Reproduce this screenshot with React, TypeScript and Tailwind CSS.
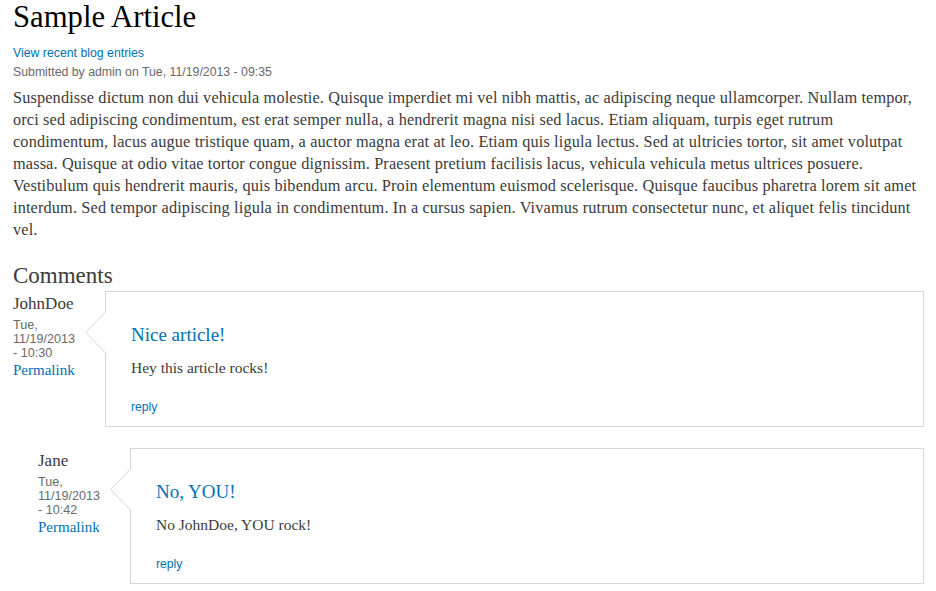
import React from 'react';

const serif = "font-['Liberation_Serif','Times_New_Roman',serif]";
const sans = "font-['Liberation_Sans',Arial,sans-serif]";

type CommentData = {
  author: string;
  date: string[];
  title: string;
  body: string;
};

const comments: CommentData[] = [
  { author: 'JohnDoe', date: ['Tue,', '11/19/2013', '- 10:30'], title: 'Nice article!', body: 'Hey this article rocks!' },
  { author: 'Jane', date: ['Tue,', '11/19/2013', '- 10:42'], title: 'No, YOU!', body: 'No JohnDoe, YOU rock!' },
];

// body text, broken where the original column wraps
const articleLines = [
  'Suspendisse dictum non dui vehicula molestie. Quisque imperdiet mi vel nibh mattis, ac adipiscing neque ullamcorper. Nullam tempor,',
  'orci sed adipiscing condimentum, est erat semper nulla, a hendrerit magna nisi sed lacus. Etiam aliquam, turpis eget rutrum',
  'condimentum, lacus augue tristique quam, a auctor magna erat at leo. Etiam quis ligula lectus. Sed at ultricies tortor, sit amet volutpat',
  'massa. Quisque at odio vitae tortor congue dignissim. Praesent pretium facilisis lacus, vehicula vehicula metus ultrices posuere.',
  'Vestibulum quis hendrerit mauris, quis bibendum arcu. Proin elementum euismod scelerisque. Quisque faucibus pharetra lorem sit amet',
  'interdum. Sed tempor adipiscing ligula in condimentum. In a cursus sapien. Vivamus rutrum consectetur nunc, et aliquet felis tincidunt',
  'vel.',
];

function Arrow() {
  return (
    <svg width="21" height="41" viewBox="0 0 21 41" className="absolute left-[-21px] top-[20px]">
      <polygon points="21,0 0.5,20.5 21,41" fill="#fff" />
      <polyline points="20.5,0 0.5,20.5 20.5,41" fill="none" stroke="#d3d7d9" strokeWidth="1" />
    </svg>
  );
}

function Comment({ c, indent }: { c: CommentData; indent?: boolean }) {
  return (
    <div className={indent ? 'flex pl-[25px]' : 'flex'}>
      <div className="w-[92px] shrink-0 pt-[3px]">
        <div className={`${serif} text-[17px] leading-[20px] text-[#3b3b3b]`}>{c.author}</div>
        <div className={`${sans} mt-[4px] w-[72px] text-[12.6px] leading-[14px] text-[#68696b]`}>
          {c.date.map((d) => (
            <div key={d}>{d}</div>
          ))}
        </div>
        <a className={`${serif} mt-[1px] block text-[15px] leading-[18px] text-[#0071b3]`}>Permalink</a>
      </div>
      <div className="relative flex-1 border border-[#d3d7d9] bg-white pl-[25px] pt-[31px] pb-[10px]">
        <Arrow />
        <h3 className={`${serif} text-[19px] leading-[24px] text-[#0071b3]`}>{c.title}</h3>
        <p className={`${serif} mt-[10px] text-[15.5px] leading-[22px] text-[#3b3b3b]`}>{c.body}</p>
        <a className={`${sans} mt-[19px] block text-[12.2px] leading-[18px] text-[#0071b3]`}>reply</a>
      </div>
    </div>
  );
}

export default function App() {
  return (
    <div className="min-h-screen bg-white pl-[13px] pr-[12px]">
      <h1 className={`${serif} text-[30.7px] leading-[34px] text-black`}>Sample Article</h1>
      <div className={`${sans} mt-[10px] text-[12.3px] leading-[19px]`}>
        <a className="block text-[#0071b3]">View recent blog entries</a>
        <div className="text-[#68696b]">Submitted by admin on Tue, 11/19/2013 - 09:35</div>
      </div>
      <p className={`${serif} mt-[5px] text-[16.3px] leading-[22px] tracking-[0.14px] text-[#3b3b3b]`}>
        {articleLines.map((line, i) => (
          <React.Fragment key={i}>
            {line}
            {i < articleLines.length - 1 && <br />}
          </React.Fragment>
        ))}
      </p>
      <h2 className={`${serif} mt-[21px] text-[23px] leading-[28px] text-[#3b3b3b]`}>Comments</h2>
      <div className="mt-[1px] flex flex-col gap-[21px]">
        <Comment c={comments[0]} />
        <Comment c={comments[1]} indent />
      </div>
    </div>
  );
}
